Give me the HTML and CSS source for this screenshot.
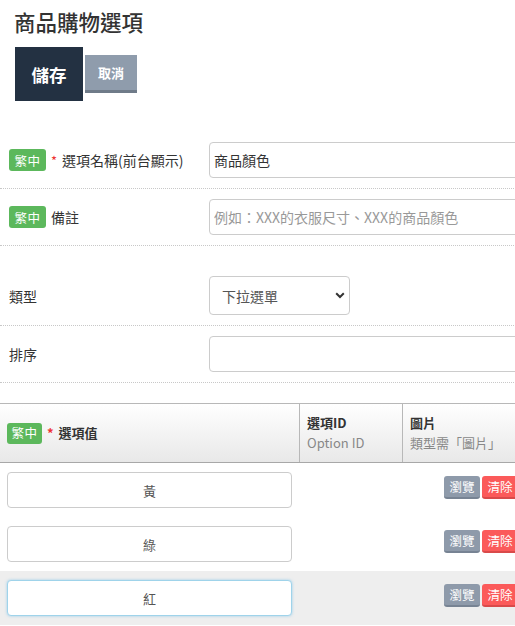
FILE: index.html
```html
<!DOCTYPE html>
<html lang="zh-Hant">
<head>
<meta charset="utf-8">
<title>商品購物選項</title>
<link rel="stylesheet" href="styles.css">
</head>
<body>
<div class="page">
  <h1 class="title">商品購物選項</h1>
  <div class="actions">
    <button class="btn-save" type="button">儲存</button>
    <button class="btn-cancel" type="button">取消</button>
  </div>

  <div class="form">
    <div class="row">
      <div class="label"><span class="badge">繁中</span><span class="req">*</span>選項名稱(前台顯示)</div>
      <input class="field" type="text" value="商品顏色">
    </div>
    <div class="row">
      <div class="label"><span class="badge">繁中</span>備註</div>
      <input class="field" type="text" placeholder="例如：XXX的衣服尺寸、XXX的商品顏色">
    </div>
    <div class="row row-gap">
      <div class="label">類型</div>
      <span class="select-wrap">
        <select class="select">
          <option>下拉選單</option>
        </select>
        <svg class="chev" width="10" height="7" viewBox="0 0 10 7"><path d="M1.2 1.3 L5 5 L8.8 1.3" fill="none" stroke="#333" stroke-width="2"/></svg>
      </span>
    </div>
    <div class="row">
      <div class="label">排序</div>
      <input class="field" type="text">
    </div>
  </div>

  <div class="table">
    <div class="thead">
      <div class="th th-first"><span class="badge badge-sm">繁中</span><span class="req">*</span>選項值</div>
      <div class="th"><div class="th-main">選項ID</div><div class="th-sub">Option ID</div></div>
      <div class="th"><div class="th-main">圖片</div><div class="th-sub">類型需「圖片」</div></div>
    </div>
    <div class="trow">
      <div class="td"><input class="val" type="text" value="黃"></div>
      <div class="td"></div>
      <div class="td td-btns"><button class="btn-sm btn-gray" type="button">瀏覽</button><button class="btn-sm btn-red" type="button">清除</button></div>
    </div>
    <div class="trow">
      <div class="td"><input class="val" type="text" value="綠"></div>
      <div class="td"></div>
      <div class="td td-btns"><button class="btn-sm btn-gray" type="button">瀏覽</button><button class="btn-sm btn-red" type="button">清除</button></div>
    </div>
    <div class="trow trow-active">
      <div class="td"><input class="val val-focus" type="text" value="紅"></div>
      <div class="td"></div>
      <div class="td td-btns"><button class="btn-sm btn-gray" type="button">瀏覽</button><button class="btn-sm btn-red" type="button">清除</button></div>
    </div>
  </div>
</div>
</body>
</html>
```

FILE: styles.css
```css
* { box-sizing: border-box; }

html, body {
  margin: 0;
  padding: 0;
  overflow: hidden;
  background: #fff;
}

body {
  font-family: "Noto Sans CJK TC", "Noto Sans", sans-serif;
  color: #333;
}

.page {
  width: 720px;
}

.title {
  margin: 0;
  padding: 7px 0 0 14px;
  height: 38px;
  font-size: 21.5px;
  line-height: 30px;
  font-weight: 500;
  color: #333;
}

.actions {
  display: flex;
  align-items: center;
  gap: 2px;
  margin-top: 9px;
  padding-left: 15px;
}

.btn-save {
  width: 68px;
  height: 54px;
  border: 0;
  background: #233142;
  color: #fff;
  font-family: inherit;
  font-size: 17.5px;
  font-weight: 700;
  padding: 0;
}

.btn-cancel {
  width: 52px;
  height: 38px;
  border: 0;
  border-bottom: 3px solid #6f7b89;
  background: #8f9cac;
  color: #fff;
  font-family: inherit;
  font-size: 13px;
  font-weight: 700;
  padding: 0;
}

.form {
  margin-top: 31px;
}

.row {
  display: flex;
  align-items: center;
  padding: 10px 0 10px 9px;
  border-bottom: 1px dotted #c8c8c8;
}

.row-gap {
  margin-top: 20px;
}

.label {
  width: 200px;
  flex: none;
  display: flex;
  align-items: center;
  font-size: 14px;
  color: #333;
}

.badge {
  display: inline-flex;
  align-items: center;
  justify-content: center;
  width: 37px;
  height: 22px;
  margin-right: 5px;
  border-radius: 3px;
  background: #5cb85c;
  color: #fff;
  font-size: 12.5px;
  letter-spacing: 0.5px;
}

.badge-sm {
  width: 35px;
  height: 21px;
}

.req {
  color: #e33;
  font-size: 13px;
  margin-right: 5px;
}

.field {
  width: 420px;
  height: 36px;
  border: 1px solid #ccc;
  border-radius: 4px;
  padding: 0 4px;
  font-family: inherit;
  font-size: 14px;
  color: #333;
  background: #fff;
}

.field::placeholder {
  color: #999;
}

.select-wrap {
  position: relative;
  display: inline-block;
}

.select {
  -webkit-appearance: none;
  appearance: none;
  width: 141px;
  height: 39px;
  border: 1px solid #ccc;
  border-radius: 4px;
  padding: 0 0 0 12px;
  background: #fff;
  font-family: inherit;
  font-size: 14px;
  color: #555;
}

.chev {
  position: absolute;
  right: 5px;
  top: 16px;
  pointer-events: none;
}

.table {
  margin-top: 20px;
}

.thead {
  display: grid;
  grid-template-columns: 299px 103px 318px;
  height: 60px;
  border-top: 1px solid #b8b8b8;
  border-bottom: 1px solid #a8a8a8;
  background: linear-gradient(#ffffff, #e8e8e8);
}

.th {
  display: flex;
  flex-direction: column;
  justify-content: center;
  padding-left: 7px;
  border-left: 1px solid #b8b8b8;
  font-size: 13px;
  line-height: 20px;
}

.th-first {
  flex-direction: row;
  align-items: center;
  justify-content: flex-start;
  border-left: 0;
  font-weight: 700;
  color: #333;
}

.th-first .badge {
  font-weight: 400;
}

.th-main {
  font-weight: 700;
  color: #333;
}

.th-sub {
  color: #888;
}

.trow {
  display: grid;
  grid-template-columns: 299px 103px 318px;
  height: 54px;
}

.trow-active {
  background: #eeeeee;
}

.td {
  padding: 9px 7px 0 7px;
}

.val {
  display: block;
  width: 285px;
  height: 36px;
  border: 1px solid #ccc;
  border-radius: 4px;
  background: #fff;
  text-align: center;
  font-family: inherit;
  font-size: 13px;
  color: #555;
}

.val-focus {
  border-color: #9fd3ea;
  box-shadow: 0 0 3px rgba(102, 185, 233, 0.6);
}

.td-btns {
  display: flex;
  align-items: flex-start;
  gap: 2px;
  padding: 13px 0 0 42px;
}

.btn-sm {
  width: 36px;
  height: 23px;
  border: 0;
  border-radius: 3px;
  padding: 0;
  color: #fff;
  font-family: inherit;
  font-size: 12.5px;
}

.btn-gray {
  background: #8e9aaa;
  border-bottom: 2px solid #778393;
}

.btn-red {
  background: #fb5a5a;
  border-bottom: 2px solid #d94a4a;
}
```
